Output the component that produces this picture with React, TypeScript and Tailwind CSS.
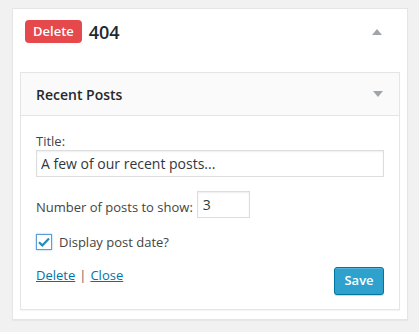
import React, { useState } from "react";

const font = { fontFamily: '"Open Sans", "Liberation Sans", sans-serif' };

const Arrow = ({ up }: { up?: boolean }) => (
  <svg width="10" height="6" viewBox="0 0 10 6" className="block">
    {up ? <path d="M0 6 L5 0 L10 6 Z" fill="#a0a5aa" /> : <path d="M0 0 L10 0 L5 6 Z" fill="#a0a5aa" />}
  </svg>
);

export default function App() {
  const [title, setTitle] = useState("A few of our recent posts...");
  const [count, setCount] = useState("3");
  const [showDate, setShowDate] = useState(true);

  return (
    <div className="min-h-[332px] w-[419px] bg-[#f1f1f1] pt-2 pl-3 font-['Open_Sans','Liberation_Sans',sans-serif] text-[#23282d]">
      <div className="w-[396px] h-[312px] bg-white border border-[#e5e5e5] shadow-[0_1px_1px_rgba(0,0,0,0.04)] px-[7px]">
        {/* widget area header */}
        <div className="flex items-center justify-between h-[23px] mt-[11px] pl-[5px] pr-[18px]">
          <div className="flex items-center gap-[7px]">
            <span className="h-[23px] px-2 flex items-center rounded bg-[#e5494b] text-white text-[13px] font-semibold leading-none">
              Delete
            </span>
            <span className="text-[18px] font-semibold leading-none">404</span>
          </div>
          <Arrow up />
        </div>

        {/* widget */}
        <div className="mt-[29px] border border-[#e5e5e5] shadow-[0_1px_1px_rgba(0,0,0,0.04)]">
          <div className="h-[43px] bg-[#fafafa] border-b border-[#e5e5e5] flex items-center justify-between pl-[15px] pr-[16px]">
            <span className="text-[14px] font-semibold">Recent Posts</span>
            <Arrow />
          </div>
          <div className="px-[15px] pt-[16px] pb-[14px] text-[13px] text-[#444]">
            <label className="block leading-[18px]">Title:</label>
            <input
              value={title}
              onChange={(e) => setTitle(e.target.value)}
              style={font}
              className="block w-[348px] h-[27px] border border-[#ddd] shadow-[inset_0_1px_2px_rgba(0,0,0,0.07)] px-[4px] text-[14px] text-[#32373c] outline-none"
            />
            <div className="flex items-center mt-[14px] gap-[4px]">
              <label className="leading-[18px] pt-[4px]">Number of posts to show:</label>
              <input
                value={count}
                onChange={(e) => setCount(e.target.value)}
                style={font}
                className="block w-[53px] h-[27px] border border-[#ddd] shadow-[inset_0_1px_2px_rgba(0,0,0,0.07)] px-[5px] text-[14px] text-[#32373c] outline-none"
              />
            </div>
            <label className="flex items-center mt-[15px] gap-[7px] cursor-pointer">
              <span
                onClick={() => setShowDate(!showDate)}
                className="w-4 h-4 border border-[#5b9dd9] shadow-[0_0_2px_rgba(30,140,190,0.5)] bg-white flex items-center justify-center"
              >
                {showDate && (
                  <svg width="12" height="10" viewBox="0 0 12 10">
                    <path d="M1 5.2 L4.3 8.4 L11 1.4" fill="none" stroke="#1e8cbe" strokeWidth="2.2" />
                  </svg>
                )}
              </span>
              <span className="leading-[18px]">Display post date?</span>
            </label>
            <div className="flex items-start justify-between mt-4">
              <div className="leading-[18px] -mt-[1px]">
                <a href="#" className="text-[#0073aa] underline">Delete</a>
                <span className="text-[#666] mx-[4px]">|</span>
                <a href="#" className="text-[#0073aa] underline">Close</a>
              </div>
              <button className="h-7 w-[50px] rounded-[3px] bg-[#2ea2cc] border border-[#0074a2] shadow-[inset_0_1px_0_rgba(120,200,230,0.5),0_1px_0_rgba(0,0,0,0.15)] text-white text-[13px] font-semibold">
                Save
              </button>
            </div>
          </div>
        </div>
      </div>
    </div>
  );
}
